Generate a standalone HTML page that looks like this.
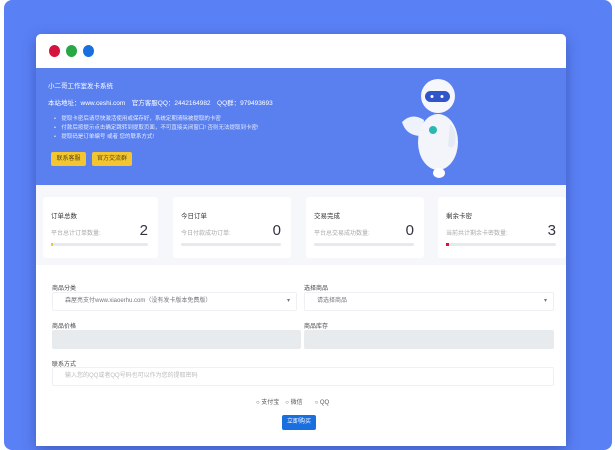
<!DOCTYPE html>
<html><head><meta charset="utf-8"><style>
*{margin:0;padding:0;box-sizing:border-box}
body{width:615px;height:450px;background:#fff;font-family:"Liberation Sans","Noto Sans CJK SC",sans-serif;position:relative;overflow:hidden}
.bg{position:absolute;left:4px;top:0;width:608px;height:450px;background:#5a80f6;border-radius:8px}
.win{position:absolute;left:36px;top:34px;width:530px;height:412px;background:#f5f7fa;border-radius:5px 5px 0 0;box-shadow:0 4px 14px rgba(30,50,120,.45);overflow:hidden}
.tb{height:34px;background:#fff;position:relative}
.dot{position:absolute;top:11px;width:11px;height:12px;border-radius:50%}
.hd{position:absolute;top:34px;left:0;width:530px;height:117px;background:#5a80f0;color:#fff;font-size:6.5px}
.t{position:absolute;white-space:nowrap}
.btn{position:absolute;top:84px;height:14px;background:#f3c531;color:#5a4a10;font-size:6px;line-height:14px;text-align:center;border-radius:2px}
.card{position:absolute;top:163px;height:61px;background:#fff;border-radius:3px}
.card .a{position:absolute;left:8px;top:13px;font-size:6.5px;color:#333}
.card .b{position:absolute;left:8px;top:31px;font-size:6px;color:#aaa}
.card .n{position:absolute;right:10px;top:25px;font-size:15px;color:#334}
.card .bar{position:absolute;left:8px;right:10px;top:46px;height:3px;background:#e6e9ee;border-radius:2px}
.form{position:absolute;top:231px;left:0;width:530px;height:181px;background:#fff}
.lb{position:absolute;font-size:6px;color:#444}
.in{position:absolute;height:19px;border:1px solid #eef0f3;border-radius:2px;font-size:6px;color:#777;line-height:17px;padding-left:12px;background:#fff}
.gr{position:absolute;height:19px;background:#e8ebee;border-radius:2px}
</style></head><body>
<div class="bg"></div>
<div class="win">
 <div class="tb">
  <div class="dot" style="left:13px;background:#d4143c"></div>
  <div class="dot" style="left:30px;background:#28a745"></div>
  <div class="dot" style="left:47px;background:#1a6fe0"></div>
 </div>
 <div class="hd">
  <div class="t" style="left:12px;top:12px">小二哥工作室发卡系统</div>
  <div class="t" style="left:12px;top:29px">本站地址：www.ceshi.com　官方客服QQ：2442164982　QQ群：979493693</div>
  <div class="t" style="left:18px;top:46px;font-size:5.5px;opacity:.85">•　提取卡密后请尽快激活使用或保存好，系统定期清除被提取的卡密</div>
  <div class="t" style="left:18px;top:55px;font-size:5.5px;opacity:.85">•　付款后按提示点击确定跳转到提取页面，不可直接关闭窗口! 否则无法提取到卡密!</div>
  <div class="t" style="left:18px;top:64px;font-size:5.5px;opacity:.85">•　提取码是订单编号 或者 您的联系方式!</div>
  <div class="btn" style="left:15px;width:35px">联系客服</div>
  <div class="btn" style="left:56px;width:40px">官方交流群</div>
  <svg style="position:absolute;left:358px;top:4px" width="80" height="110" viewBox="0 0 80 110">
   <path d="M8 50 Q18 40 30 48 L28 64 Q12 64 8 50Z" fill="#eef2fb"/>
   <ellipse cx="44" cy="70" rx="20" ry="28" fill="#f3f5fb"/>
   <circle cx="44" cy="24" r="17" fill="#f6f7fc"/>
   <rect x="31" y="19" width="25" height="11" rx="5.5" fill="#2f55c8"/>
   <circle cx="38" cy="24.5" r="1.5" fill="#fff"/><circle cx="48" cy="24.5" r="1.5" fill="#fff"/>
   <circle cx="39" cy="58" r="4" fill="#2bb8b0"/>
   <path d="M56 52 Q63 57 61 72 Q58 78 54 74Z" fill="#e6eaf5"/>
   <ellipse cx="45" cy="101" rx="6" ry="5" fill="#fff"/>
  </svg>
 </div>
 <div class="card" style="left:7px;width:115px"><div class="a">订单总数</div><div class="b">平台总计订单数量:</div><div class="n">2</div><div class="bar"><div style="width:2px;height:3px;background:#f3c531"></div></div></div>
 <div class="card" style="left:137px;width:118px"><div class="a">今日订单</div><div class="b">今日付款成功订单:</div><div class="n">0</div><div class="bar"></div></div>
 <div class="card" style="left:270px;width:118px"><div class="a">交易完成</div><div class="b">平台总交易成功数量:</div><div class="n">0</div><div class="bar"></div></div>
 <div class="card" style="left:402px;width:128px"><div class="a">剩余卡密</div><div class="b">当前共计剩余卡密数量:</div><div class="n">3</div><div class="bar"><div style="width:3px;height:3px;background:#d4143c"></div></div></div>
 <div class="form">
  <div class="lb" style="left:16px;top:18px">商品分类</div>
  <div class="in" style="left:16px;top:27px;width:245px">森屋亮支付www.xiaoerhu.com（没有发卡版本免费版）<span style="position:absolute;right:6px">▾</span></div>
  <div class="lb" style="left:268px;top:18px">选择商品</div>
  <div class="in" style="left:268px;top:27px;width:250px">请选择商品<span style="position:absolute;right:6px">▾</span></div>
  <div class="lb" style="left:16px;top:56px">商品价格</div>
  <div class="gr" style="left:16px;top:65px;width:249px"></div>
  <div class="lb" style="left:268px;top:56px">商品库存</div>
  <div class="gr" style="left:268px;top:65px;width:250px"></div>
  <div class="lb" style="left:16px;top:94px">联系方式</div>
  <div class="in" style="left:16px;top:102px;width:502px;color:#bbb">输入您的QQ或者QQ号码也可以作为您的提取密码</div>
  <div class="lb" style="left:220px;top:132px;color:#555">○ 支付宝　○ 微信　　○ QQ</div>
  <div style="position:absolute;left:246px;top:150px;width:34px;height:15px;background:#1a6fe0;color:#fff;font-size:6px;line-height:15px;text-align:center;border-radius:2px">立即购买</div>
 </div>
</div>
</body></html>
